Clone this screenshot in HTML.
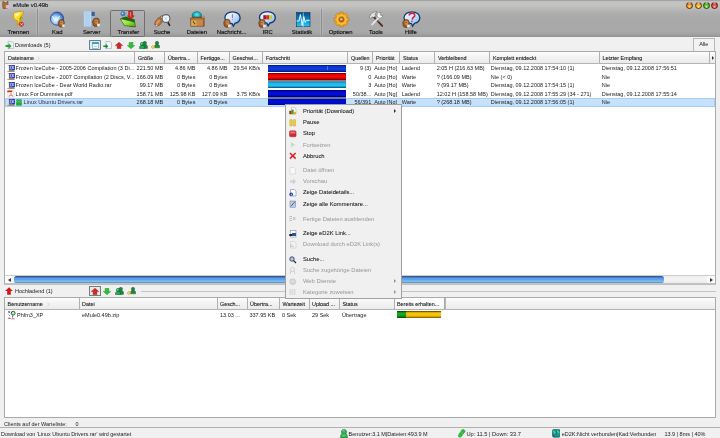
<!DOCTYPE html><html><head><meta charset="utf-8"><style>
*{margin:0;padding:0;box-sizing:border-box}
html,body{width:720px;height:438px;overflow:hidden;background:#f0f0f0;font-family:"Liberation Sans",sans-serif;font-size:5.5px;color:#1a1a1a}
body{will-change:transform;position:relative}
.a{position:absolute}
.t{position:absolute;white-space:nowrap;line-height:6px}
.r{text-align:right}
.lbl{position:absolute;top:29.2px;white-space:nowrap;font-size:5.9px;line-height:6px;color:#101010;-webkit-text-stroke:0.15px #101010}
.sep{position:absolute;top:9px;width:1px;height:27.5px;background:#8e8e8e;box-shadow:-1px 0 0 rgba(255,255,255,.12),1px 0 0 rgba(255,255,255,.12)}
.hs{position:absolute;width:1px;background:#b0b0b0}
</style></head><body>
<div class="a" style="left:0;top:0;width:720px;height:36.5px;background:linear-gradient(#a0a0a0 0,#a6a6a5 0.8px,#c4c4c2 1.6px,#c3c3c1 5px,#b9b9b8 9px,#b0afaf 12.5px,#aaa9a9 18px,#aaa9a9 31px,#a3a3a3 34px,#959595 36.5px)"></div>
<svg class="a" style="left:1px;top:0px" width="9" height="9" viewBox="0 0 9 9"><path d="M2 1l1.5 1.5h2L7 1v3.5l-0.5 4h-4.5l-0.5-4z" fill="#a8742c" stroke="#6a4010" stroke-width=".5"/><rect x="4.8" y="5" width="3.8" height="3.6" rx=".8" fill="#d8b8e8"/></svg>
<div class="t" style="left:13px;top:1.8px;font-size:5.9px;color:#1a1a2a;-webkit-text-stroke:0.15px #1a1a2a">eMule v0.49b</div>
<div class="a" style="left:686.1px;top:1.5px;width:7px;height:7px;border-radius:50%;border:0.8px solid #5a2808;background:radial-gradient(circle at 50% 78%,#ffe070,#f0a020 45%,#c06810 85%)"></div>
<div class="a" style="left:688.1px;top:2.3px;width:3px;height:1.6px;border-radius:50%;background:rgba(255,230,210,.55)"></div>
<div class="a" style="left:694.5px;top:1.5px;width:7px;height:7px;border-radius:50%;border:0.8px solid #5a3a08;background:radial-gradient(circle at 50% 78%,#fff080,#f0b828 45%,#c08010 85%)"></div>
<div class="a" style="left:696.5px;top:2.3px;width:3px;height:1.6px;border-radius:50%;background:rgba(255,230,210,.55)"></div>
<div class="a" style="left:702.9px;top:1.5px;width:7px;height:7px;border-radius:50%;border:0.8px solid #1a4a08;background:radial-gradient(circle at 50% 78%,#c8f890,#60c030 45%,#3a8a18 85%)"></div>
<div class="a" style="left:704.9px;top:2.3px;width:3px;height:1.6px;border-radius:50%;background:rgba(255,230,210,.55)"></div>
<div class="a" style="left:711.3px;top:1.5px;width:7px;height:7px;border-radius:50%;border:0.8px solid #601010;background:radial-gradient(circle at 50% 78%,#ffb0b0,#e85050 45%,#c02828 85%)"></div>
<div class="a" style="left:713.3px;top:2.3px;width:3px;height:1.6px;border-radius:50%;background:rgba(255,230,210,.55)"></div>
<div class="a" style="left:110px;top:10px;width:35px;height:26.5px;border:1px solid #707070;background:linear-gradient(#b2b2b2,#a2a2a2);border-radius:1.5px"></div>
<div class="sep" style="left:37px"></div>
<div class="sep" style="left:321px"></div>
<svg width="0" height="0" style="position:absolute"><defs><linearGradient id="gy" x1="0" y1="0" x2="1" y2="1"><stop offset="0" stop-color="#fff890"/><stop offset=".5" stop-color="#f8d818"/><stop offset="1" stop-color="#e0a800"/></linearGradient><radialGradient id="gb" cx=".4" cy=".6" r=".65"><stop offset="0" stop-color="#f0faff"/><stop offset=".45" stop-color="#9ac8f4"/><stop offset=".8" stop-color="#4a80d0"/><stop offset="1" stop-color="#2a4a98"/></radialGradient><linearGradient id="gbub" x1="0" y1="0" x2="1" y2="1"><stop offset="0" stop-color="#f8fcff"/><stop offset=".45" stop-color="#d0e8fc"/><stop offset=".8" stop-color="#88c4f4"/><stop offset="1" stop-color="#4a98e8"/></linearGradient><linearGradient id="ggr" x1="0" y1="0" x2="1" y2="1"><stop offset="0" stop-color="#d8ff90"/><stop offset=".5" stop-color="#98e040"/><stop offset="1" stop-color="#4aa010"/></linearGradient><linearGradient id="gst" x1="0" y1="0" x2="0" y2="1"><stop offset="0" stop-color="#0a4a88"/><stop offset=".5" stop-color="#1088c8"/><stop offset="1" stop-color="#30c8f8"/></linearGradient><radialGradient id="gteal" cx=".5" cy=".4" r=".6"><stop offset="0" stop-color="#60f0f0"/><stop offset=".6" stop-color="#18a8b8"/><stop offset="1" stop-color="#0a5a68"/></radialGradient></defs></svg>
<svg class="a" style="left:11px;top:10px" width="16" height="18" viewBox="0 0 16 18"><path d="M2.6 3.6C4.6 1.4 10 1 12.8 1.8L10.4 6.4l1.4 1.5-5.6 7.4.3-4.2-2.6-1.4C2.6 8.4 2.2 5.6 2.6 3.6z" fill="url(#gy)" stroke="#d89000" stroke-width=".8"/><path d="M9.8 6l1.2 1.8-2.8 3.6.5-2.8z" fill="#8a9420"/><path d="M4.4 4.4c1.4-1 3.4-1.4 5-1.2L6.4 6.2z" fill="#fffad0" opacity=".85"/><circle cx="10.4" cy="14.2" r="2.2" fill="#d83830" stroke="#902010" stroke-width=".4"/><path d="M9.6 13.4l2 2M11.6 13.4l-2 2" stroke="#fff" stroke-width=".7"/></svg>
<div class="lbl" style="left:7.5px">Trennen</div>
<svg class="a" style="left:49px;top:11px" width="17" height="17" viewBox="0 0 17 17"><circle cx="8" cy="7.6" r="6.6" fill="url(#gb)" stroke="#1a3a80" stroke-width=".7"/><path d="M3.5 5l2 4 1.5-3 1.5 3 2-4" fill="none" stroke="#e8f6ff" stroke-width="1"/><g transform="translate(9.2,8.3) scale(0.95)"><path d="M1.4 0.8c1.4-.8 3.6-.6 4.6.4l.5 2.6-.3 3.2-1.6 1.2h-2.6l-1.6-1.2-.5-3.6z" fill="#9a5a28" stroke="#4a2808" stroke-width=".5"/><path d="M1.8 2c.8-.6 2.6-.6 3.6.2l-.2 3-1.8.8-1.4-1z" fill="#c88a50"/><path d="M2.4 3.4c.6-.3 1.2-.3 1.6 0" stroke="#5a3010" stroke-width=".5" fill="none"/><path d="M4.4 5.4l2.6 .2-.2 2.2-2.6.4z" fill="#f0ece4"/></g></svg>
<div class="lbl" style="left:52px">Kad</div>
<svg class="a" style="left:83px;top:10px" width="19" height="18" viewBox="0 0 19 18"><path d="M0.8 1.2h7.6v15.4h-7.6z" fill="#c4dcf6" stroke="#9ab6d8" stroke-width=".4"/><path d="M1.8 2h5v14h-5z" fill="#b0d0f0"/><path d="M8.4 1.2l3.6 .4v14.6l-3.6 .4z" fill="#98b4d0"/><path d="M8.6 1.8l3.2 .3v4l-3.2-.2z" fill="#40608c"/><g transform="translate(9.6,7.8) scale(1.05)"><path d="M1.4 0.8c1.4-.8 3.6-.6 4.6.4l.5 2.6-.3 3.2-1.6 1.2h-2.6l-1.6-1.2-.5-3.6z" fill="#9a5a28" stroke="#4a2808" stroke-width=".5"/><path d="M1.8 2c.8-.6 2.6-.6 3.6.2l-.2 3-1.8.8-1.4-1z" fill="#c88a50"/><path d="M2.4 3.4c.6-.3 1.2-.3 1.6 0" stroke="#5a3010" stroke-width=".5" fill="none"/><path d="M4.4 5.4l2.6 .2-.2 2.2-2.6.4z" fill="#f0ece4"/></g></svg>
<div class="lbl" style="left:83px">Server</div>
<svg class="a" style="left:119px;top:10px" width="18" height="18" viewBox="0 0 18 18"><circle cx="4" cy="3.8" r="2.2" fill="#4a88d8" stroke="#1a4a98" stroke-width=".4"/><circle cx="3.5" cy="3.3" r=".8" fill="#d0e8ff"/><path d="M1.6 8.2l5.2-1.6 2 .6 7 2.2.2 7.4-4.2.2z" fill="#1a6a10"/><path d="M9.6 1.4c.4-.6 3.6-.6 4 0l.1 4.4h1.5l-3.4 4-3.4-4h1.3z" fill="#e02828" stroke="#6a1010" stroke-width=".45"/><path d="M11.4 2v4.4" stroke="#ff9c9c" stroke-width=".7"/><path d="M1.2 8.8l9.6 2 5 1.6.6 4.6-11-1.4z" fill="url(#ggr)" stroke="#1a5a08" stroke-width=".6"/></svg>
<div class="lbl" style="left:117.5px">Transfer</div>
<svg class="a" style="left:153px;top:10px" width="19" height="18" viewBox="0 0 19 18"><path d="M14.6 11.8l2 3.6" stroke="#2a2018" stroke-width="1.6" stroke-linecap="round"/><g transform="rotate(-50 6 11.5)"><ellipse cx="6" cy="11.5" rx="5.6" ry="2.9" fill="#b87038" stroke="#5a3010" stroke-width=".5"/><ellipse cx="5" cy="11" rx="3" ry="1.4" fill="#d89858"/></g><circle cx="9" cy="7.2" r="1.5" fill="#f0d0a0" stroke="#3a2010" stroke-width=".5"/><path d="M2.2 15.2l2-.8.2 1.8z" fill="#f4eee0"/><circle cx="13" cy="8.5" r="3.9" fill="#f0f6fc" stroke="#5a6270" stroke-width="1.1"/><path d="M11.4 7.2l2.8 2.6M14 7.2l-2.4 2.6" stroke="#a0c0e0" stroke-width=".6"/></svg>
<div class="lbl" style="left:153.7px">Suche</div>
<svg class="a" style="left:189px;top:10px" width="17" height="18" viewBox="0 0 17 18"><ellipse cx="7.8" cy="5.4" rx="4.8" ry="3.8" fill="url(#gteal)" stroke="#0a5060" stroke-width=".4"/><path d="M1.6 8.2l3.6-1 7.6.2 2.4 1v7.8h-13.4z" fill="#b06a30" stroke="#4a2808" stroke-width=".5"/><path d="M2 9.4h11.8v6.4h-11.8z" fill="#c8884a"/><path d="M2.4 10.6h5v5h-5z" fill="#d8b050"/><path d="M5 11.4c-.9 0-1.1 1.4 0 1.4s.9 1.4 0 1.4" fill="none" stroke="#3a2008" stroke-width=".8"/><path d="M12.2 8l2.8-2.2.6 2.4z" fill="#e0a868" stroke="#5a3010" stroke-width=".3"/></svg>
<div class="lbl" style="left:186.7px">Dateien</div>
<svg class="a" style="left:222px;top:10px" width="20" height="18" viewBox="0 0 20 18"><path d="M10.5 1.8c4.4 0 7.6 2.5 7.6 5.9 0 2.8-2.2 5-5.2 5.7l-1.6 2.8-1.2-2.5c-4.2-.3-7.2-2.8-7.2-6 0-3.4 3.2-5.9 7.6-5.9z" fill="url(#gbub)" stroke="#183470" stroke-width="1.3"/><path d="M10.4 4.2v3.8" stroke="#d05090" stroke-width="1"/><circle cx="10.4" cy="9.3" r=".5" fill="#d05090"/><g transform="translate(1.8,9.0) scale(1.0)"><path d="M1.4 0.8c1.4-.8 3.6-.6 4.6.4l.5 2.6-.3 3.2-1.6 1.2h-2.6l-1.6-1.2-.5-3.6z" fill="#9a5a28" stroke="#4a2808" stroke-width=".5"/><path d="M1.8 2c.8-.6 2.6-.6 3.6.2l-.2 3-1.8.8-1.4-1z" fill="#c88a50"/><path d="M2.4 3.4c.6-.3 1.2-.3 1.6 0" stroke="#5a3010" stroke-width=".5" fill="none"/><path d="M4.4 5.4l2.6 .2-.2 2.2-2.6.4z" fill="#f0ece4"/></g></svg>
<div class="lbl" style="left:216.7px">Nachricht...</div>
<svg class="a" style="left:257px;top:10px" width="20" height="18" viewBox="0 0 20 18"><path d="M10.5 1.6c4.4 0 7.8 2.5 7.8 5.8 0 2.8-2.2 5-5.4 5.6l-1.8 2.8-1.2-2.6c-4.2-.3-7.4-2.7-7.4-5.8 0-3.3 3.4-5.8 8-5.8z" fill="url(#gbub)" stroke="#183470" stroke-width="1.3"/><rect x="6.3" y="5.2" width="3" height="4.2" fill="#a01830"/><rect x="9.3" y="5.2" width="3" height="4.2" fill="#e02828"/><rect x="12.3" y="5.2" width="3" height="4.2" fill="#c8d030"/><g transform="translate(1.8,9.2) scale(1.0)"><path d="M1.4 0.8c1.4-.8 3.6-.6 4.6.4l.5 2.6-.3 3.2-1.6 1.2h-2.6l-1.6-1.2-.5-3.6z" fill="#9a5a28" stroke="#4a2808" stroke-width=".5"/><path d="M1.8 2c.8-.6 2.6-.6 3.6.2l-.2 3-1.8.8-1.4-1z" fill="#c88a50"/><path d="M2.4 3.4c.6-.3 1.2-.3 1.6 0" stroke="#5a3010" stroke-width=".5" fill="none"/><path d="M4.4 5.4l2.6 .2-.2 2.2-2.6.4z" fill="#f0ece4"/></g></svg>
<div class="lbl" style="left:262.5px">IRC</div>
<svg class="a" style="left:295.5px;top:11.5px" width="15" height="15.5" viewBox="0 0 15 15.5"><rect x="0.6" y="0.6" width="13.4" height="14.2" fill="url(#gst)" stroke="#06305a" stroke-width=".6"/><path d="M7.3 0.6v14.2" stroke="#a0e8ff" stroke-width=".7"/><path d="M0.6 9h2.4l1.4-6.5 1.8 11 1.6-9 1.4 6 1.2-2.2h3.4" fill="none" stroke="#e0fcff" stroke-width="1"/></svg>
<div class="lbl" style="left:291.7px">Statistik</div>
<svg class="a" style="left:333px;top:11px" width="17" height="17" viewBox="0 0 17 17"><path d="M13.83 6.77 L15.94 6.96 L15.94 10.04 L13.83 10.23 L13.49 11.04 L14.85 12.67 L12.67 14.85 L11.04 13.49 L10.23 13.83 L10.04 15.94 L6.96 15.94 L6.77 13.83 L5.96 13.49 L4.33 14.85 L2.15 12.67 L3.51 11.04 L3.17 10.23 L1.06 10.04 L1.06 6.96 L3.17 6.77 L3.51 5.96 L2.15 4.33 L4.33 2.15 L5.96 3.51 L6.77 3.17 L6.96 1.06 L10.04 1.06 L10.23 3.17 L11.04 3.51 L12.67 2.15 L14.85 4.33 L13.49 5.96Z" fill="#f0a818" stroke="#b86a08" stroke-width=".5" stroke-linejoin="round"/><circle cx="8.5" cy="8.5" r="5.2" fill="#f8c030"/><circle cx="8.5" cy="8.5" r="2.9" fill="#a85a18" stroke="#d88828" stroke-width=".5"/><circle cx="8.3" cy="8.3" r="1.3" fill="#d8b8a8"/></svg>
<div class="lbl" style="left:328.7px">Optionen</div>
<svg class="a" style="left:367px;top:10px" width="18" height="18" viewBox="0 0 18 18"><path d="M6.4 6.6l8.8 9.2" stroke="#4a3020" stroke-width="1.9" stroke-linecap="round"/><path d="M8.5 8.8l3 3.1" stroke="#c8a888" stroke-width=".6"/><path d="M2 7.2l2.6-3.8c1.4-1.2 3.4-1.8 5.4-1.6l-2.2 2.4 1.2 1.6-2.6 1.8-1.4-.8-1.4 1.6z" fill="#e4e4e4" stroke="#585858" stroke-width=".5"/><path d="M12.8 6.4l-8.2 8.8" stroke="#f4f4f4" stroke-width="1.7"/><path d="M12.8 6.4l-8.2 8.8" stroke="#808080" stroke-width=".5" stroke-dasharray="1 .8"/><path d="M11.4 2.6a3 3 0 1 0 4.6 3l-2 .2-1-1.8.9-1.6z" fill="#f8f8f8" stroke="#686868" stroke-width=".5"/></svg>
<div class="lbl" style="left:369px">Tools</div>
<svg class="a" style="left:401px;top:10px" width="20" height="18" viewBox="0 0 20 18"><path d="M11 1.8c4.4 0 7.8 2.6 7.8 6 0 2.8-2.2 5-5.4 5.6l-1.8 2.8-1.2-2.6c-4.2-.3-7.4-2.7-7.4-5.8 0-3.4 3.4-6 8-6z" fill="url(#gbub)" stroke="#183470" stroke-width="1.3"/><path d="M8.2 5.6c0-1.6 1.3-2.4 2.8-2.4s2.8.8 2.8 2.2c0 1.8-2.4 1.8-2.4 3.6v.8" fill="none" stroke="#e01838" stroke-width="1.5"/><circle cx="10.9" cy="11.4" r=".8" fill="#e01838"/><g transform="translate(1.8,9.2) scale(1.0)"><path d="M1.4 0.8c1.4-.8 3.6-.6 4.6.4l.5 2.6-.3 3.2-1.6 1.2h-2.6l-1.6-1.2-.5-3.6z" fill="#9a5a28" stroke="#4a2808" stroke-width=".5"/><path d="M1.8 2c.8-.6 2.6-.6 3.6.2l-.2 3-1.8.8-1.4-1z" fill="#c88a50"/><path d="M2.4 3.4c.6-.3 1.2-.3 1.6 0" stroke="#5a3010" stroke-width=".5" fill="none"/><path d="M4.4 5.4l2.6 .2-.2 2.2-2.6.4z" fill="#f0ece4"/></g></svg>
<div class="lbl" style="left:405px">Hilfe</div>
<svg class="a" style="left:4.5px;top:40.5px" width="9" height="8" viewBox="0 0 9 8"><path d="M3 0.5h4l1.5 1.5v5.5h-5.5z" fill="#f4f4f4" stroke="#8aa0b8" stroke-width=".5"/><path d="M0.5 4h3v-2l3 3.2-3 2.8v-2h-3z" fill="#20a040"/></svg>
<div class="t" style="left:15px;top:42.1px">Downloads (5)</div>
<div class="a" style="left:89.2px;top:40.2px;width:11.6px;height:9.5px;border:1px solid #6c7c8a;background:#d6eef6;border-radius:.8px"></div>
<svg class="a" style="left:91.5px;top:41.6px" width="7" height="7" viewBox="0 0 7 7"><rect x="0.3" y="0.3" width="6.4" height="6.4" fill="#e8fafc" stroke="#4a8aa0" stroke-width=".5"/><rect x="0.3" y="0.3" width="6.4" height="1.6" fill="#3a90a8"/><path d="M2 4.6h3" stroke="#90c0c8" stroke-width=".6"/></svg>
<svg class="a" style="left:102.5px;top:41px" width="9" height="8" viewBox="0 0 9 8"><path d="M3 0.4h4l1.4 1.4v5.8h-5.4z" fill="#f4f8f8" stroke="#8090a8" stroke-width=".5"/><path d="M0.3 4.6h2.4v-1.8l2.6 2.5-2.6 2.4v-1.7h-2.4z" fill="#1a8a30"/></svg>
<svg class="a" style="left:114.5px;top:41.5px" width="8" height="7" viewBox="0 0 8 7"><path d="M4 0.2l3.8 3.4h-1.9v3.2h-3.8v-3.2h-1.9z" fill="#d42828" stroke="#901010" stroke-width=".35"/></svg>
<svg class="a" style="left:127px;top:41.5px" width="8" height="7" viewBox="0 0 8 7"><path d="M4 6.8l3.8-3.4h-1.9v-3.2h-3.8v3.2h-1.9z" fill="#30c038" stroke="#188020" stroke-width=".35"/></svg>
<svg class="a" style="left:139px;top:41px" width="9" height="8" viewBox="0 0 9 8"><circle cx="5.8" cy="2" r="1.7" fill="#1a8a40" stroke="#0a4a20" stroke-width=".4"/><path d="M3.4 7.4v-2.2c0-1 1-1.6 2.4-1.6s2.6.6 2.6 1.6v2.2z" fill="#1a8a40" stroke="#0a4a20" stroke-width=".4"/><circle cx="3" cy="3" r="1.7" fill="#28a850" stroke="#0a4a20" stroke-width=".4"/><path d="M0.5 7.8v-1.8c0-1 1-1.6 2.5-1.6s2.5.6 2.5 1.6v1.8z" fill="#28a850" stroke="#0a4a20" stroke-width=".4"/><circle cx="2.6" cy="2.6" r=".6" fill="#a0f0b0"/></svg>
<svg class="a" style="left:150.8px;top:41px" width="9" height="8" viewBox="0 0 9 8"><circle cx="6" cy="2" r="1.7" fill="#1a8a40" stroke="#0a4a20" stroke-width=".4"/><path d="M3.6 6.8v-1.8c0-1 1-1.6 2.4-1.6s2.6.6 2.6 1.6v1.8z" fill="#1a8a40" stroke="#0a4a20" stroke-width=".4"/><circle cx="1.9" cy="6" r="1.3" fill="none" stroke="#d8b020" stroke-width="1"/><path d="M2.8 5.1l1.4-1.4" stroke="#d8b020" stroke-width=".8"/></svg>
<div class="a" style="left:693px;top:38px;width:22px;height:13.5px;border:1px solid #b8b8b8;border-bottom:none;background:#f2f2f2"></div>
<div class="t" style="left:699.2px;top:41px">Alle</div>
<div class="a" style="left:4px;top:51px;width:712px;height:234px;background:#fff;border:1px solid #aaaaaa"></div>
<div class="a" style="left:5px;top:52px;width:710px;height:11px;background:linear-gradient(#fdfdfd,#f4f4f4 40%,#ebebeb)"></div>
<div class="a" style="left:5px;top:63px;width:710px;height:1px;background:#b4b4b4"></div>
<div class="hs" style="left:134px;top:52px;height:11px"></div>
<div class="hs" style="left:164px;top:52px;height:11px"></div>
<div class="hs" style="left:197px;top:52px;height:11px"></div>
<div class="hs" style="left:229px;top:52px;height:11px"></div>
<div class="hs" style="left:262px;top:52px;height:11px"></div>
<div class="hs" style="left:347px;top:52px;height:11px"></div>
<div class="hs" style="left:372px;top:52px;height:11px"></div>
<div class="hs" style="left:399px;top:52px;height:11px"></div>
<div class="hs" style="left:434px;top:52px;height:11px"></div>
<div class="hs" style="left:489px;top:52px;height:11px"></div>
<div class="hs" style="left:599px;top:52px;height:11px"></div>
<div class="hs" style="left:709px;top:52px;height:11px"></div>
<div class="t" style="left:8px;top:55.3px;font-size:5.4px;color:#141414;-webkit-text-stroke:0.08px #141414">Dateiname</div>
<div class="t" style="left:138px;top:55.3px;font-size:5.4px;color:#141414;-webkit-text-stroke:0.08px #141414">Größe</div>
<div class="t" style="left:168px;top:55.3px;font-size:5.4px;color:#141414;-webkit-text-stroke:0.08px #141414">Übertra...</div>
<div class="t" style="left:200.5px;top:55.3px;font-size:5.4px;color:#141414;-webkit-text-stroke:0.08px #141414">Fertigge...</div>
<div class="t" style="left:232.5px;top:55.3px;font-size:5.4px;color:#141414;-webkit-text-stroke:0.08px #141414">Geschwi...</div>
<div class="t" style="left:266px;top:55.3px;font-size:5.4px;color:#141414;-webkit-text-stroke:0.08px #141414">Fortschritt</div>
<div class="t" style="left:351px;top:55.3px;font-size:5.4px;color:#141414;-webkit-text-stroke:0.08px #141414">Quellen</div>
<div class="t" style="left:376px;top:55.3px;font-size:5.4px;color:#141414;-webkit-text-stroke:0.08px #141414">Priorität</div>
<div class="t" style="left:403px;top:55.3px;font-size:5.4px;color:#141414;-webkit-text-stroke:0.08px #141414">Status</div>
<div class="t" style="left:438px;top:55.3px;font-size:5.4px;color:#141414;-webkit-text-stroke:0.08px #141414">Verbleibend</div>
<div class="t" style="left:493px;top:55.3px;font-size:5.4px;color:#141414;-webkit-text-stroke:0.08px #141414">Komplett entdeckt</div>
<div class="t" style="left:602.6px;top:55.3px;font-size:5.4px;color:#141414;-webkit-text-stroke:0.08px #141414">Letzter Empfang</div>
<svg class="a" style="left:35.5px;top:55.5px" width="5" height="5" viewBox="0 0 5 5"><path d="M1.5 0.8l2 1.7-2 1.7" fill="none" stroke="#d0d0d0" stroke-width=".8"/></svg>
<div class="a" style="left:712.4px;top:55.9px;width:0;height:0;border-top:2.1px solid transparent;border-bottom:2.1px solid transparent;border-left:2.4px solid #303030"></div>
<svg class="a" style="left:7px;top:64.60px" width="8" height="7" viewBox="0 0 8 7"><path d="M0.6 0.6h1.6v5.8h5.2" fill="#fff8d8" stroke="#d8c060" stroke-width=".9"/><path d="M0.3 6.6h7.4" stroke="#806020" stroke-width=".6"/><rect x="2.6" y="0.2" width="5.2" height="5" fill="#1c30c8" stroke="#0c1470" stroke-width=".4"/><path d="M3.6 1v3.2M3.6 1h.7c.8 0 1 .6 1 1.6s-.2 1.6-1 1.6h-.7M5.9 1v3.2M7.2 1l-1.3 1.6 1.3 1.6" fill="none" stroke="#fff" stroke-width=".55"/></svg>
<div class="t" style="left:15.6px;top:65.20px;font-size:5.5px;">Frozen IceCube - 2005-2006 Compilation (3 Di...</div>
<div class="t r" style="right:556.8px;top:65.20px">221.50 MB</div>
<div class="t r" style="right:524.6px;top:65.20px">4.86 MB</div>
<div class="t r" style="right:492.5px;top:65.20px">4.86 MB</div>
<div class="t r" style="right:459.7px;top:65.20px">29.54 KB/s</div>
<div class="t r" style="right:348.8px;top:65.20px">9 (3)</div>
<div class="t" style="left:374.2px;top:65.20px">Auto [Ho]</div>
<div class="t" style="left:401.7px;top:65.20px">Ladend</div>
<div class="t" style="left:436.7px;top:65.20px">2:05 H (216.63 MB)</div>
<div class="t" style="left:490.8px;top:65.20px">Dienstag, 09.12.2008 17:54:10 (1)</div>
<div class="t" style="left:601.7px;top:65.20px">Dienstag, 09.12.2008 17:56:51</div>
<svg class="a" style="left:7px;top:73.10px" width="8" height="7" viewBox="0 0 8 7"><path d="M0.6 0.6h1.6v5.8h5.2" fill="#fff8d8" stroke="#d8c060" stroke-width=".9"/><path d="M0.3 6.6h7.4" stroke="#806020" stroke-width=".6"/><rect x="2.6" y="0.2" width="5.2" height="5" fill="#1c30c8" stroke="#0c1470" stroke-width=".4"/><path d="M3.6 1v3.2M3.6 1h.7c.8 0 1 .6 1 1.6s-.2 1.6-1 1.6h-.7M5.9 1v3.2M7.2 1l-1.3 1.6 1.3 1.6" fill="none" stroke="#fff" stroke-width=".55"/></svg>
<div class="t" style="left:15.6px;top:73.70px;font-size:5.5px;">Frozen IceCube - 2007 Compilation (2 Discs, V...</div>
<div class="t r" style="right:556.8px;top:73.70px">166.09 MB</div>
<div class="t r" style="right:524.6px;top:73.70px">0 Bytes</div>
<div class="t r" style="right:492.5px;top:73.70px">0 Bytes</div>
<div class="t r" style="right:348.8px;top:73.70px">0</div>
<div class="t" style="left:374.2px;top:73.70px">Auto [Ho]</div>
<div class="t" style="left:401.7px;top:73.70px">Warte</div>
<div class="t" style="left:436.7px;top:73.70px">? (166.09 MB)</div>
<div class="t" style="left:490.8px;top:73.70px">Nie (&lt; 0)</div>
<div class="t" style="left:601.7px;top:73.70px">Nie</div>
<svg class="a" style="left:7px;top:81.60px" width="8" height="7" viewBox="0 0 8 7"><path d="M0.6 0.6h1.6v5.8h5.2" fill="#fff8d8" stroke="#d8c060" stroke-width=".9"/><path d="M0.3 6.6h7.4" stroke="#806020" stroke-width=".6"/><rect x="2.6" y="0.2" width="5.2" height="5" fill="#1c30c8" stroke="#0c1470" stroke-width=".4"/><path d="M3.6 1v3.2M3.6 1h.7c.8 0 1 .6 1 1.6s-.2 1.6-1 1.6h-.7M5.9 1v3.2M7.2 1l-1.3 1.6 1.3 1.6" fill="none" stroke="#fff" stroke-width=".55"/></svg>
<div class="t" style="left:15.6px;top:82.20px;font-size:5.5px;">Frozen IceCube - Dear World Radio.rar</div>
<div class="t r" style="right:556.8px;top:82.20px">99.17 MB</div>
<div class="t r" style="right:524.6px;top:82.20px">0 Bytes</div>
<div class="t r" style="right:492.5px;top:82.20px">0 Bytes</div>
<div class="t r" style="right:348.8px;top:82.20px">3</div>
<div class="t" style="left:374.2px;top:82.20px">Auto [Ho]</div>
<div class="t" style="left:401.7px;top:82.20px">Warte</div>
<div class="t" style="left:436.7px;top:82.20px">? (99.17 MB)</div>
<div class="t" style="left:490.8px;top:82.20px">Dienstag, 09.12.2008 17:54:15 (1)</div>
<div class="t" style="left:601.7px;top:82.20px">Nie</div>
<svg class="a" style="left:7px;top:90.10px" width="8" height="7.5" viewBox="0 0 8 7.5"><path d="M0.8 0.5h5l1.2 1.2v5.6h-6.2z" fill="#fff" stroke="#c8c8c8" stroke-width=".5"/><rect x="0.3" y="0.6" width="5" height="1.6" fill="#d82020"/><path d="M2 6.8l2-3.6 2 3.6M2.6 5.6h2.8" fill="none" stroke="#e04848" stroke-width=".6"/></svg>
<div class="t" style="left:15.6px;top:90.70px;font-size:5.5px;">Linux For Dummies.pdf</div>
<div class="t r" style="right:556.8px;top:90.70px">158.71 MB</div>
<div class="t r" style="right:524.6px;top:90.70px">125.98 KB</div>
<div class="t r" style="right:492.5px;top:90.70px">127.09 KB</div>
<div class="t r" style="right:459.7px;top:90.70px">3.75 KB/s</div>
<div class="t r" style="right:348.8px;top:90.70px">50/38...</div>
<div class="t" style="left:374.2px;top:90.70px">Auto [Ng]</div>
<div class="t" style="left:401.7px;top:90.70px">Ladend</div>
<div class="t" style="left:436.7px;top:90.70px">12:02 H (158.58 MB)</div>
<div class="t" style="left:490.8px;top:90.70px">Dienstag, 09.12.2008 17:55:29 (34 - 271)</div>
<div class="t" style="left:601.7px;top:90.70px">Dienstag, 09.12.2008 17:55:14</div>
<div class="a" style="left:5px;top:98.20px;width:710px;height:8.50px;background:#c6e1fc;border:0.7px solid #a6cef6"></div>
<svg class="a" style="left:7px;top:98.60px" width="8" height="7" viewBox="0 0 8 7"><path d="M0.6 0.6h1.6v5.8h5.2" fill="#fff8d8" stroke="#d8c060" stroke-width=".9"/><path d="M0.3 6.6h7.4" stroke="#806020" stroke-width=".6"/><rect x="2.6" y="0.2" width="5.2" height="5" fill="#1c30c8" stroke="#0c1470" stroke-width=".4"/><path d="M3.6 1v3.2M3.6 1h.7c.8 0 1 .6 1 1.6s-.2 1.6-1 1.6h-.7M5.9 1v3.2M7.2 1l-1.3 1.6 1.3 1.6" fill="none" stroke="#fff" stroke-width=".55"/></svg>
<svg class="a" style="left:16.4px;top:98.70px" width="6" height="7" viewBox="0 0 6 7"><circle cx="1.6" cy="1.5" r="1.2" fill="#28c838" stroke="#0a7018" stroke-width=".35"/><circle cx="4.4" cy="1.5" r="1.2" fill="#28c838" stroke="#0a7018" stroke-width=".35"/><ellipse cx="1.6" cy="4.8" rx="1.35" ry="2" fill="#20b830" stroke="#0a7018" stroke-width=".35"/><ellipse cx="4.4" cy="4.8" rx="1.35" ry="2" fill="#20b830" stroke="#0a7018" stroke-width=".35"/></svg>
<div class="t" style="left:23.6px;top:99.20px;font-size:5.5px;color:#283048">Linux Ubuntu Drivers.rar</div>
<div class="t r" style="right:556.8px;top:99.20px">268.18 MB</div>
<div class="t r" style="right:524.6px;top:99.20px">0 Bytes</div>
<div class="t r" style="right:492.5px;top:99.20px">0 Bytes</div>
<div class="t r" style="right:348.8px;top:99.20px">56/391</div>
<div class="t" style="left:374.2px;top:99.20px">Auto [Ng]</div>
<div class="t" style="left:401.7px;top:99.20px">Warte</div>
<div class="t" style="left:436.7px;top:99.20px">? (268.18 MB)</div>
<div class="t" style="left:490.8px;top:99.20px">Dienstag, 09.12.2008 17:56:05 (1)</div>
<div class="t" style="left:601.7px;top:99.20px">Nie</div>
<!-- progress bars -->
<div class="a" style="left:268.1px;width:77.6px;top:64.5px;height:7px;background:linear-gradient(#001878 0,#0832c8 1.5px,#103ede 3.5px,#0832c8 5.5px,#001470 7px)"></div>
<div class="a" style="left:326.5px;top:65.8px;width:1.8px;height:4.5px;background:#5a80c0;opacity:.85"></div>
<div class="a" style="left:268.1px;width:77.6px;top:73px;height:7px;background:linear-gradient(#5a0000 0,#e00000 1.5px,#ff0808 3.5px,#d00000 5.5px,#600000 7px)"></div>
<div class="a" style="left:268.1px;width:77.6px;top:80px;height:2px;background:linear-gradient(#7a8088,#6a8a9a)"></div>
<div class="a" style="left:268.1px;width:77.6px;top:82px;height:6.3px;background:linear-gradient(#1888c0 0,#20b8ec 1.5px,#22c0f0 3.5px,#10a0d0 4.6px,#003848 6.3px)"></div>
<div class="a" style="left:268.1px;width:77.6px;top:89.8px;height:7px;background:linear-gradient(#000070 0,#0008c8 1.5px,#0010d8 3.5px,#0008c0 5.5px,#000068 7px)"></div>
<div class="a" style="left:268.1px;width:77.6px;top:96.8px;height:2px;background:#6a7898"></div>
<div class="a" style="left:268.1px;width:77.6px;top:98.8px;height:6.6px;background:linear-gradient(#0008b0 0,#0010d8 2.5px,#0008c0 5px,#000070 6.6px)"></div>

<!-- h scrollbar -->
<div class="a" style="left:4px;top:284px;width:712px;height:1px;background:#bcc0c4"></div>
<div class="a" style="left:5px;top:275.3px;width:710px;height:9px;background:linear-gradient(#cdcdcd 0,#cdcdcd 1px,#eeeeee 1.5px,#f4f4f4 5px,#ececec 7.5px,#c4c4c4 8.5px)"></div>
<div class="a" style="left:5px;top:276.3px;width:9px;height:7px;background:#fbfbfb"></div>
<div class="a" style="left:706.5px;top:276.3px;width:8.5px;height:7px;background:#fbfbfb"></div>
<div class="a" style="left:7.8px;top:277.8px;width:0;height:0;border-top:2px solid transparent;border-bottom:2px solid transparent;border-right:3px solid #383838"></div>
<div class="a" style="left:709.5px;top:277.8px;width:0;height:0;border-top:2px solid transparent;border-bottom:2px solid transparent;border-left:3px solid #383838"></div>
<div class="a" style="left:14px;top:275.6px;width:649.8px;height:7.4px;border-radius:2.6px;background:linear-gradient(#2e5088 0,#3a64a8 1.1px,#5a9ae8 2px,#62a4f0 4px,#82c8f8 5.2px,#6a9cc0 6.4px,#4a7898 7.4px)"></div>

<!-- Hochladend label -->
<svg class="a" style="left:5px;top:287px" width="8" height="8" viewBox="0 0 8 8"><path d="M4 0.3l3.8 3.7h-2v3.7h-3.6v-3.7h-2z" fill="#d01818"/></svg>
<div class="t" style="left:15px;top:287.5px">Hochladend (1)</div>
<div class="a" style="left:89.4px;top:286.3px;width:11.3px;height:9.4px;border:1px solid #7a7a7a;background:#e8e8e8"></div>
<div class="a" style="left:140.7px;top:290.8px;width:575px;height:1px;background:#c4c4c4"></div>


<svg class="a" style="left:91.2px;top:287.5px" width="8" height="7" viewBox="0 0 8 7"><path d="M4 0.2l3.8 3.4h-1.9v3.2h-3.8v-3.2h-1.9z" fill="#d42828" stroke="#901010" stroke-width=".35"/></svg>
<svg class="a" style="left:103px;top:287.5px" width="8" height="7" viewBox="0 0 8 7"><path d="M4 6.8l3.8-3.4h-1.9v-3.2h-3.8v3.2h-1.9z" fill="#30c038" stroke="#188020" stroke-width=".35"/></svg>
<svg class="a" style="left:115.4px;top:287px" width="9" height="8" viewBox="0 0 9 8"><circle cx="5.8" cy="2" r="1.7" fill="#1a8a40" stroke="#0a4a20" stroke-width=".4"/><path d="M3.4 7.4v-2.2c0-1 1-1.6 2.4-1.6s2.6.6 2.6 1.6v2.2z" fill="#1a8a40" stroke="#0a4a20" stroke-width=".4"/><circle cx="3" cy="3" r="1.7" fill="#28a850" stroke="#0a4a20" stroke-width=".4"/><path d="M0.5 7.8v-1.8c0-1 1-1.6 2.5-1.6s2.5.6 2.5 1.6v1.8z" fill="#28a850" stroke="#0a4a20" stroke-width=".4"/><circle cx="2.6" cy="2.6" r=".6" fill="#a0f0b0"/></svg>
<svg class="a" style="left:127px;top:287px" width="9" height="8" viewBox="0 0 9 8"><circle cx="6" cy="2" r="1.7" fill="#1a8a40" stroke="#0a4a20" stroke-width=".4"/><path d="M3.6 6.8v-1.8c0-1 1-1.6 2.4-1.6s2.6.6 2.6 1.6v1.8z" fill="#1a8a40" stroke="#0a4a20" stroke-width=".4"/><circle cx="1.9" cy="6" r="1.3" fill="none" stroke="#d8b020" stroke-width="1"/><path d="M2.8 5.1l1.4-1.4" stroke="#d8b020" stroke-width=".8"/></svg>
<div class="a" style="left:4px;top:297px;width:712px;height:121px;background:#fff;border:1px solid #aaaaaa"></div>
<div class="a" style="left:5px;top:298px;width:710px;height:11px;background:linear-gradient(#fdfdfd,#f4f4f4 40%,#ebebeb)"></div>
<div class="a" style="left:5px;top:309px;width:710px;height:1px;background:#b4b4b4"></div>
<div class="a" style="left:394px;top:298px;width:50px;height:11px;background:linear-gradient(#ffffff,#fafafa 60%,#f2f2f2)"></div>
<div class="a" style="left:444px;top:298px;width:2px;height:11px;background:linear-gradient(90deg,#a0a0a0,#c0c0c0)"></div>
<div class="hs" style="left:79px;top:298px;height:11px"></div>
<div class="hs" style="left:217px;top:298px;height:11px"></div>
<div class="hs" style="left:247px;top:298px;height:11px"></div>
<div class="hs" style="left:279px;top:298px;height:11px"></div>
<div class="hs" style="left:309px;top:298px;height:11px"></div>
<div class="hs" style="left:339px;top:298px;height:11px"></div>
<div class="hs" style="left:394px;top:298px;height:11px"></div>
<div class="t" style="left:7.6px;top:301.3px;font-size:5.4px;color:#141414;-webkit-text-stroke:0.08px #141414">Benutzername</div>
<div class="t" style="left:82px;top:301.3px;font-size:5.4px;color:#141414;-webkit-text-stroke:0.08px #141414">Datei</div>
<div class="t" style="left:220px;top:301.3px;font-size:5.4px;color:#141414;-webkit-text-stroke:0.08px #141414">Gesch...</div>
<div class="t" style="left:250px;top:301.3px;font-size:5.4px;color:#141414;-webkit-text-stroke:0.08px #141414">Übertra...</div>
<div class="t" style="left:282.5px;top:301.3px;font-size:5.4px;color:#141414;-webkit-text-stroke:0.08px #141414">Wartezeit</div>
<div class="t" style="left:312px;top:301.3px;font-size:5.4px;color:#141414;-webkit-text-stroke:0.08px #141414">Upload ...</div>
<div class="t" style="left:342.5px;top:301.3px;font-size:5.4px;color:#141414;-webkit-text-stroke:0.08px #141414">Status</div>
<div class="t" style="left:397px;top:301.3px;font-size:5.4px;color:#141414;-webkit-text-stroke:0.08px #141414">Bereits erhalten...</div>
<svg class="a" style="left:46.0px;top:301.5px" width="5" height="5" viewBox="0 0 5 5"><path d="M1.5 0.8l2 1.7-2 1.7" fill="none" stroke="#d0d0d0" stroke-width=".8"/></svg>
<!-- upload row -->
<svg class="a" style="left:6.5px;top:309.5px" width="9" height="10" viewBox="0 0 9 10"><path d="M1 1l2.2 2.2M3.2 1l-2.2 2.2M1.5 4.5l1.6 1.6" stroke="#6a58a8" stroke-width=".8"/><circle cx="6.2" cy="3.2" r="1.9" fill="#c8e8c8" stroke="#1a6a28" stroke-width="1"/><path d="M5.6 5.2v2.4" stroke="#2a6a38" stroke-width=".8"/><path d="M0.8 8.6c1-.8 2-.8 3 0M4.5 8.8h3" stroke="#c05070" stroke-width=".9"/></svg>
<div class="t" style="left:17px;top:311.8px">Phfm3_XP</div>
<div class="t" style="left:82px;top:311.8px">eMule0.49b.zip</div>
<div class="t" style="left:220px;top:311.8px">13.03 ...</div>
<div class="t" style="left:249.5px;top:311.8px">337.95 KB</div>
<div class="t" style="left:282px;top:311.8px">0 Sek</div>
<div class="t" style="left:312px;top:311.8px">29 Sek</div>
<div class="t" style="left:342px;top:311.8px">Übertrage</div>
<div class="a" style="left:397px;top:311px;width:44px;height:7.4px;background:linear-gradient(#3a2800 0,#d8a000 1.2px,#f8c810 2.6px,#f0c000 4.6px,#c89000 6px,#402800 7.4px)"></div>
<div class="a" style="left:397px;top:311px;width:9px;height:7.4px;background:linear-gradient(#0a2a0a 0,#108a18 1.2px,#20b020 3px,#109018 5px,#0a3a0a 7.4px)"></div>
<div class="a" style="left:405.5px;top:312.2px;width:1.5px;height:5px;background:#b0c020;opacity:.7"></div>


<div class="a" style="left:285px;top:104.4px;width:116.5px;height:194.4px;background:#f0f0f0;border:0.7px solid #a0a0a0"></div>
<svg class="a" style="left:288.5px;top:107.4px" width="8" height="8" viewBox="0 0 8 8"><path d="M2.5 0.5h3l1.5 1.5v5h-4.5z" fill="#fff" stroke="#909090" stroke-width=".4"/><rect x="0.3" y="3.8" width="2.2" height="3.4" fill="#a03010"/><rect x="2.5" y="2.6" width="2.2" height="4.6" fill="#40a020"/><rect x="4.7" y="4.8" width="2.2" height="2.4" fill="#e0b020"/></svg>
<div class="t" style="left:303px;top:108.1px;font-size:5.8px;color:#101010;-webkit-text-stroke:0.04px #101010">Priorität (Download)</div>
<div class="a" style="left:393.5px;top:109.2px;width:0;height:0;border-top:2.1px solid transparent;border-bottom:2.1px solid transparent;border-left:2.6px solid #303030"></div>
<svg class="a" style="left:288.5px;top:118.5px" width="8" height="8" viewBox="0 0 8 8"><rect x="0.8" y="0.5" width="2.4" height="6.6" rx=".9" fill="#f0d040" stroke="#b09010" stroke-width=".4"/><rect x="4.2" y="0.5" width="2.4" height="6.6" rx=".9" fill="#f0d040" stroke="#b09010" stroke-width=".4"/></svg>
<div class="t" style="left:303px;top:119.2px;font-size:5.8px;color:#101010;-webkit-text-stroke:0.04px #101010">Pause</div>
<svg class="a" style="left:288.5px;top:129.6px" width="8" height="8" viewBox="0 0 8 8"><rect x="0.5" y="0.8" width="6.6" height="6" rx="1.2" fill="#d02830" stroke="#801818" stroke-width=".4"/><rect x="1.2" y="1.4" width="5.2" height="2.2" fill="#f09090" opacity=".7"/></svg>
<div class="t" style="left:303px;top:130.3px;font-size:5.8px;color:#101010;-webkit-text-stroke:0.04px #101010">Stop</div>
<svg class="a" style="left:288.5px;top:140.9px" width="8" height="8" viewBox="0 0 8 8"><path d="M1.8 0.8l4.6 3-4.6 3z" fill="#c8dcc8"/></svg>
<div class="t" style="left:303px;top:141.6px;font-size:5.8px;color:#959595">Fortsetzen</div>
<svg class="a" style="left:288.5px;top:151.8px" width="8" height="8" viewBox="0 0 8 8"><path d="M1 1l5.6 5.6M6.6 1l-5.6 5.6" stroke="#e02020" stroke-width="1.5"/></svg>
<div class="t" style="left:303px;top:152.5px;font-size:5.8px;color:#101010;-webkit-text-stroke:0.04px #101010">Abbruch</div>
<svg class="a" style="left:288.5px;top:166.6px" width="8" height="8" viewBox="0 0 8 8"><path d="M1 0.5h4l1.5 1.5v5h-5.5z" fill="#f8f8f8" stroke="#c8c8c8" stroke-width=".5"/></svg>
<div class="t" style="left:303px;top:167.3px;font-size:5.8px;color:#959595">Datei öffnen</div>
<svg class="a" style="left:288.5px;top:177.5px" width="8" height="8" viewBox="0 0 8 8"><path d="M1 2.5h3v-2l3 3-3 3v-2h-3z" fill="#d0d0d0"/></svg>
<div class="t" style="left:303px;top:178.2px;font-size:5.8px;color:#959595">Vorschau</div>
<svg class="a" style="left:288.5px;top:188.6px" width="8" height="8" viewBox="0 0 8 8"><path d="M1.5 0.5h4l1.5 1.5v5h-5.5z" fill="#fff" stroke="#5070b0" stroke-width=".5"/><circle cx="2.2" cy="5.4" r="1.8" fill="#1030a0"/><rect x="1.8" y="4.6" width=".8" height="2" fill="#fff"/></svg>
<div class="t" style="left:303px;top:189.3px;font-size:5.8px;color:#101010;-webkit-text-stroke:0.04px #101010">Zeige Dateidetails...</div>
<svg class="a" style="left:288.5px;top:199.9px" width="8" height="8" viewBox="0 0 8 8"><rect x="1" y="1" width="5.6" height="6.2" fill="#c0c8f0" stroke="#5060a0" stroke-width=".4"/><path d="M2 6.2l4-4.6" stroke="#308030" stroke-width="1"/></svg>
<div class="t" style="left:303px;top:200.6px;font-size:5.8px;color:#101010;-webkit-text-stroke:0.04px #101010">Zeige alle Kommentare...</div>
<svg class="a" style="left:288.5px;top:214.8px" width="8" height="8" viewBox="0 0 8 8"><path d="M0.5 1.5h2.5M0.5 3.5h2.5M0.5 5.5h2.5M4 2l2.5 3M6.5 2l-2.5 3" stroke="#a8a8a8" stroke-width=".7"/></svg>
<div class="t" style="left:303px;top:215.5px;font-size:5.8px;color:#959595">Fertige Dateien ausblenden</div>
<svg class="a" style="left:288.5px;top:229.5px" width="8" height="8" viewBox="0 0 8 8"><rect x="1.5" y="0.5" width="5.5" height="6.5" fill="#fff" stroke="#6080a0" stroke-width=".5"/><rect x="0.3" y="4" width="4" height="2" fill="#202020"/><rect x="3" y="3" width="4" height="3" fill="#3050a0"/></svg>
<div class="t" style="left:303px;top:230.2px;font-size:5.8px;color:#101010;-webkit-text-stroke:0.04px #101010">Zeige eD2K Link...</div>
<svg class="a" style="left:288.5px;top:240.5px" width="8" height="8" viewBox="0 0 8 8"><path d="M1.5 0.5h4l1.5 1.5v5h-5.5z" fill="#f4f4f4" stroke="#c0c0c0" stroke-width=".5"/><path d="M1 4h3M1 5.5h4" stroke="#b8b8b8" stroke-width=".6"/></svg>
<div class="t" style="left:303px;top:241.2px;font-size:5.8px;color:#959595">Download durch eD2K Link(s)</div>
<svg class="a" style="left:288.5px;top:255.6px" width="8" height="8" viewBox="0 0 8 8"><circle cx="3" cy="3" r="2.2" fill="#b8c8e0" stroke="#304060" stroke-width=".9"/><path d="M4.6 4.6l2.4 2.4" stroke="#202020" stroke-width="1.2"/></svg>
<div class="t" style="left:303px;top:256.3px;font-size:5.8px;color:#101010;-webkit-text-stroke:0.04px #101010">Suche...</div>
<svg class="a" style="left:288.5px;top:266.5px" width="8" height="8" viewBox="0 0 8 8"><circle cx="3.5" cy="2.5" r="2" fill="none" stroke="#c8c8c8" stroke-width=".8"/><path d="M1 7l1-3M6 7l-1-3" stroke="#c8c8c8" stroke-width=".8"/></svg>
<div class="t" style="left:303px;top:267.2px;font-size:5.8px;color:#959595">Suche zugehörige Dateien</div>
<svg class="a" style="left:288.5px;top:277.5px" width="8" height="8" viewBox="0 0 8 8"><circle cx="3.7" cy="3.7" r="3" fill="#d4d4d4" stroke="#c0c0c0" stroke-width=".5"/><path d="M2 3.5h3.4" stroke="#f4f4f4" stroke-width=".6"/></svg>
<div class="t" style="left:303px;top:278.2px;font-size:5.8px;color:#959595">Web Dienste</div>
<div class="a" style="left:393.5px;top:279.3px;width:0;height:0;border-top:2.1px solid transparent;border-bottom:2.1px solid transparent;border-left:2.6px solid #909090"></div>
<svg class="a" style="left:288.5px;top:288.4px" width="8" height="8" viewBox="0 0 8 8"><path d="M0.5 2h6.5M0.5 4h6.5M0.5 6h6.5" stroke="#c0c0c0" stroke-width=".9" stroke-dasharray="1.5 .6"/></svg>
<div class="t" style="left:303px;top:289.1px;font-size:5.8px;color:#959595">Kategorie zuweisen</div>
<div class="a" style="left:393.5px;top:290.2px;width:0;height:0;border-top:2.1px solid transparent;border-bottom:2.1px solid transparent;border-left:2.6px solid #909090"></div>
<div class="t" style="left:4px;top:420.6px">Clients auf der Warteliste:</div>
<div class="t" style="left:75.5px;top:420.6px">0</div>
<div class="a" style="left:0;top:427px;width:720px;height:1px;background:#b0b0b0"></div>
<div class="t" style="left:1px;top:430.8px;font-size:5.42px">Download von 'Linux Ubuntu Drivers.rar' wird gestartet</div>
<!-- status bar -->
<svg class="a" style="left:339.6px;top:428.6px" width="8" height="9.4" viewBox="0 0 8 9.4"><path d="M3.8 0.4c1.8 0 2.8 1.2 2.8 2.6 0 .8-.3 1.4-.8 1.8 1 .6 1.6 1.6 1.6 2.8v1.6h-6.8v-1.6c0-1.2.6-2.2 1.6-2.8-.5-.4-.8-1-.8-1.8 0-1.4 1-2.6 2.4-2.6z" fill="#30b050" stroke="#0a5a20" stroke-width=".5"/><path d="M2.4 2.2c.6-.8 1.8-.8 2.4 0" stroke="#c0f8c8" stroke-width=".6" fill="none"/><path d="M2 6.6h3.6" stroke="#90e8a0" stroke-width=".6"/></svg>
<div class="t" style="left:348.6px;top:430.8px">Benutzer:3.1 M|Dateien:493.9 M</div>
<svg class="a" style="left:457.5px;top:429px" width="8" height="8.5" viewBox="0 0 8 8.5"><path d="M4.6 0.6c1.2-.4 2.6.6 2.4 1.8-.1.6-.5 1-.9 1.3l-2.6 3.4c-.4.9-1.4 1.4-2.2 1-1-.4-1.2-1.6-.6-2.4l2.4-3.4c.2-.9.7-1.5 1.5-1.7z" fill="#38c840" stroke="#0a7a18" stroke-width=".5"/><path d="M2.2 5.6l1.6 1M4.6 2.4l1.6 1" stroke="#0a7a18" stroke-width=".5"/></svg>
<div class="t" style="left:466.4px;top:430.8px;font-size:5.7px">Up: 11.5 | Down: 33.7</div>
<svg class="a" style="left:551.8px;top:429px" width="8.6" height="8.6" viewBox="0 0 8.6 8.6"><rect x="0.4" y="0.4" width="7.8" height="7.8" rx="1.6" fill="#18a090" stroke="#0a4a48" stroke-width=".6"/><path d="M4.3 0.8v7" stroke="#0a5a50" stroke-width=".5"/><path d="M1.2 1.8l2.2 2.4M5 1.6l2.4 2.4" stroke="#80f0d0" stroke-width=".9"/><path d="M1 5.6l1.6 2.2" stroke="#5a2a5a" stroke-width="1"/></svg>
<div class="t" style="left:561.7px;top:430.8px">eD2K:Nicht verbunden|Kad:Verbunden</div>
<div class="t" style="left:664.4px;top:430.8px">13.9 | 8ms | 40%</div>

</body></html>
